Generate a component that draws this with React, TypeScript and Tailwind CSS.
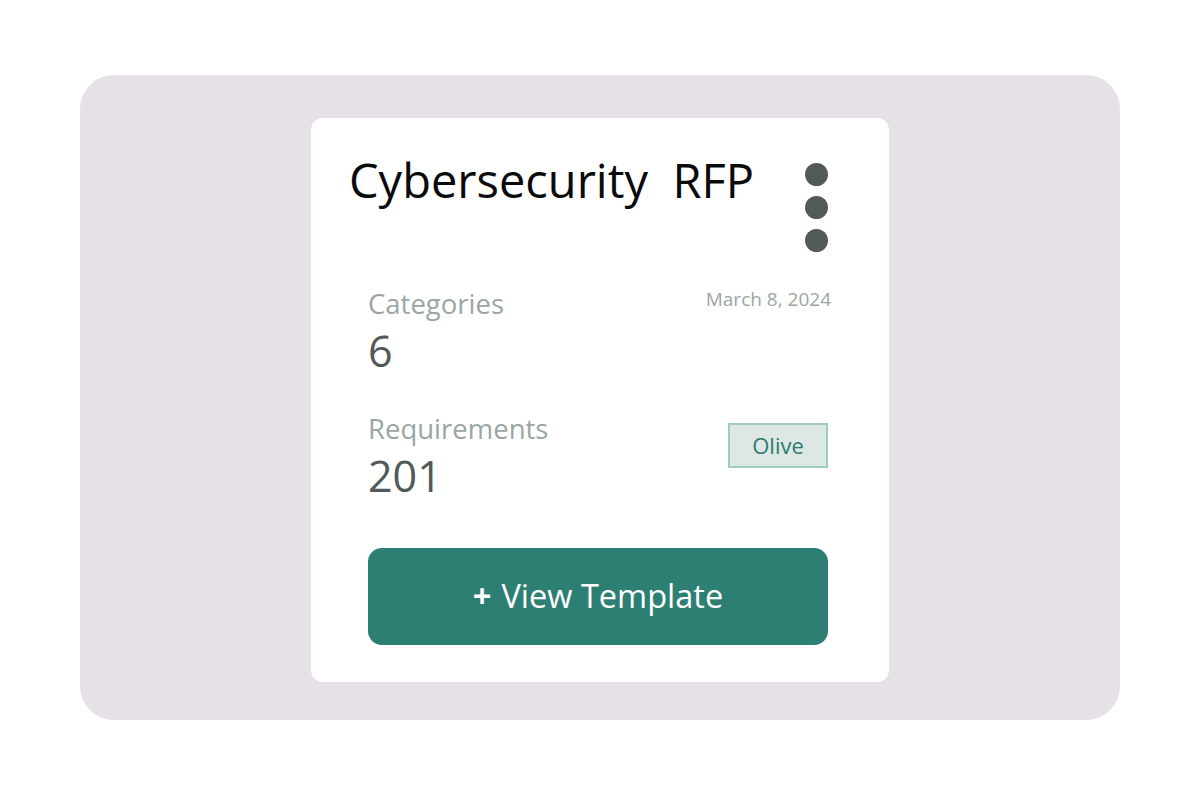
import React from 'react';

const Stat: React.FC<{ label: string; value: string }> = ({ label, value }) => (
  <div className="flex flex-col">
    <span className="text-[27.5px] leading-[34px] text-[#9ba6a3]">{label}</span>
    <span className="mt-[6px] text-[43px] leading-[48px] text-[#525a58]">{value}</span>
  </div>
);

const App: React.FC = () => {
  return (
    <div
      className="w-[1200px] h-[800px] bg-white pt-[75px] px-[80px]"
      style={{ fontFamily: '"Open Sans", "Noto Sans", sans-serif' }}
    >
      <div className="h-[645px] rounded-[34px] bg-[#e6e1e7] flex justify-center pt-[43px]">
        <div className="w-[578px] h-[564px] bg-white rounded-[12px] flex flex-col">
          <div className="flex justify-between items-start pl-[38px] pr-[61px] pt-[32px]">
            <h2 className="text-[47px] leading-[60px] text-[#0a0a0a] whitespace-pre">Cybersecurity  RFP</h2>
            <div className="flex flex-col gap-[10px] pt-[13px]">
              <span className="w-[23px] h-[23px] rounded-full bg-[#525a58]" />
              <span className="w-[23px] h-[23px] rounded-full bg-[#525a58]" />
              <span className="w-[23px] h-[23px] rounded-full bg-[#525a58]" />
            </div>
          </div>
          <div className="pl-[57px] pr-[61px] mt-[35px] flex flex-col">
            <div className="flex justify-between items-start">
              <Stat label="Categories" value="6" />
              <span className="text-[19px] leading-[24px] text-[#9ba6a3] mr-[-3px]">March 8, 2024</span>
            </div>
            <div className="flex justify-between items-start mt-[37px]">
              <Stat label="Requirements" value="201" />
              <span className="mt-[11px] w-[100px] h-[45px] border-2 border-[#9fcbc1] bg-[#dde8e5] text-[#2e7a6f] text-[22px] flex items-center justify-center">
                Olive
              </span>
            </div>
            <button className="mt-[48px] h-[97px] rounded-[14px] bg-[#2d7f74] text-white text-[32.5px] flex items-center justify-center gap-[10px]">
              <span className="font-bold">+</span>
              <span>View Template</span>
            </button>
          </div>
        </div>
      </div>
    </div>
  );
};

export default App;
